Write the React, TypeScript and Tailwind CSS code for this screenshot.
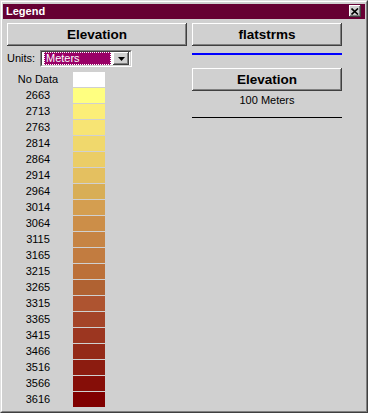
import React from 'react'

const rows: [string, string][] = [
    ['No Data', '#ffffff'],
    ['2663', '#ffff80'],
    ['2713', '#fcee78'],
    ['2763', '#f7e474'],
    ['2814', '#f0d86c'],
    ['2864', '#ebcd66'],
    ['2914', '#e4c060'],
    ['2964', '#d8ae56'],
    ['3014', '#d49e50'],
    ['3064', '#cc8e48'],
    ['3115', '#c68444'],
    ['3165', '#c27c40'],
    ['3215', '#bc7038'],
    ['3265', '#b06232'],
    ['3315', '#ae5430'],
    ['3365', '#a44428'],
    ['3415', '#9c3620'],
    ['3466', '#942a18'],
    ['3516', '#8c1c10'],
    ['3566', '#860e08'],
    ['3616', '#800000'],
]

function Button({ label }: { label: string }) {
    return (
        <div className="flex h-[23px] w-full items-center justify-center bg-[#d0d0d0] text-[13.5px] font-bold leading-none text-black shadow-[inset_-1px_-1px_#404040,inset_1px_1px_#ffffff,inset_-2px_-2px_#808080]">
            {label}
        </div>
    )
}

export default function App() {
    return (
        <div className="h-[413px] w-[368px] border border-t-[#dfdfdf] border-l-[#dfdfdf] border-r-[#404040] border-b-[#404040] bg-[#d0d0d0] font-['Liberation_Sans',Arial,sans-serif] text-black">
            <div className="flex h-full flex-col border border-t-white border-l-white border-r-[#808080] border-b-[#808080] pl-px pr-px pt-[2px]">
                {/* title bar */}
                <div className="flex h-[15px] items-start justify-between bg-[#660033] pl-[3px] pr-[4px]">
                    <span className="text-[11px] font-bold leading-[15px] text-white">Legend</span>
                    <div className="mt-px flex h-[12px] w-[12px] items-center justify-center bg-[#d0d0d0] shadow-[inset_-1px_-1px_#404040,inset_1px_1px_#ffffff,inset_-2px_-2px_#808080]">
                        <svg width="8" height="7" viewBox="0 0 8 7" aria-hidden="true">
                            <path d="M0.5 0.5 7 6.5 M7 0.5 0.5 6.5" stroke="#000" strokeWidth="1.6" />
                        </svg>
                    </div>
                </div>

                <div className="flex gap-[5px] pl-[4px] pt-[4px]">
                    {/* left column */}
                    <div className="flex w-[180px] flex-col">
                        <Button label="Elevation" />
                        <div className="mt-[4px] flex h-[17px] items-center">
                            <span className="w-[33px] text-[11px] leading-none">Units:</span>
                            <div className="flex h-[17px] w-[92px] items-center border-t border-l border-t-[#808080] border-l-[#808080] border-r border-b border-r-white border-b-white">
                                <div className="flex h-full flex-1 items-center border-t border-l border-t-[#404040] border-l-[#404040] border-r border-b border-r-[#d0d0d0] border-b-[#d0d0d0] bg-white pl-[2px] pr-px">
                                    <div className="flex h-[13px] flex-1 items-center border border-dotted border-white bg-[#990066] pl-px text-[11px] leading-none text-white">
                                        Meters
                                    </div>
                                    <div className="ml-[2px] flex h-[13px] w-[16px] items-center justify-center bg-[#d0d0d0] shadow-[inset_-1px_-1px_#404040,inset_1px_1px_#ffffff,inset_-2px_-2px_#808080]">
                                        <svg width="7" height="4" viewBox="0 0 7 4" aria-hidden="true">
                                            <path d="M0 0h7L3.5 4Z" fill="#000" />
                                        </svg>
                                    </div>
                                </div>
                            </div>
                        </div>

                        <div className="mt-[5px] flex flex-col">
                            {rows.map(([label, color]) => (
                                <div key={label} className="flex h-[16px] items-start">
                                    <span className="w-[62px] text-center text-[11px] leading-[15px]">{label}</span>
                                    <div className="ml-[4px] h-[15px] w-[32px]" style={{ backgroundColor: color }} />
                                </div>
                            ))}
                        </div>
                    </div>

                    {/* right column */}
                    <div className="flex w-[150px] flex-col">
                        <Button label="flatstrms" />
                        <div className="mt-[7px] h-[2px] bg-[#0000ff]" />
                        <div className="mt-[13px]">
                            <Button label="Elevation" />
                        </div>
                        <div className="mt-[2px] text-center text-[11px] leading-[14px]">100 Meters</div>
                        <div className="mt-[10px] h-px bg-black" />
                    </div>
                </div>
            </div>
        </div>
    )
}
